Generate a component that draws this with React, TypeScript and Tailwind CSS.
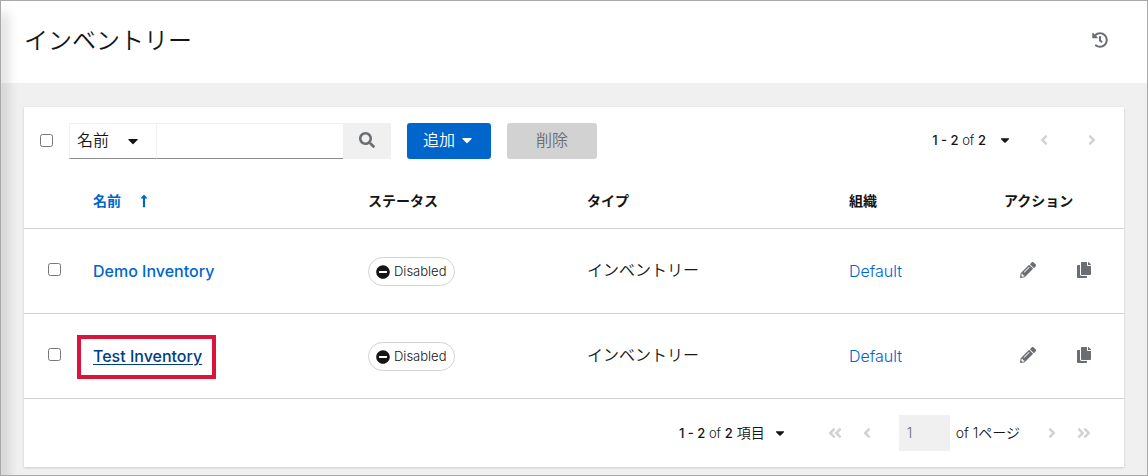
import { useState } from "react";
import {
  FaAngleDoubleLeft,
  FaAngleDoubleRight,
  FaAngleLeft,
  FaAngleRight,
  FaCaretDown,
  FaCopy,
  FaHistory,
  FaLongArrowAltUp,
  FaMinusCircle,
  FaPencilAlt,
  FaSearch,
} from "react-icons/fa";

type Inventory = {
  name: string;
  status: string;
  type: string;
  organization: string;
  highlighted?: boolean;
};

const inventories: Inventory[] = [
  { name: "Demo Inventory", status: "Disabled", type: "インベントリー", organization: "Default" },
  { name: "Test Inventory", status: "Disabled", type: "インベントリー", organization: "Default", highlighted: true },
];

function Range({ unit }: { unit?: string }) {
  return (
    <span className="whitespace-nowrap">
      <span className="text-[13px]">
        <b className="font-medium">1 - 2</b> of <b className="font-medium">2</b>
      </span>
      {unit && <span> {unit}</span>}
    </span>
  );
}

function Toolbar() {
  return (
    <div className="flex items-center p-4">
      <input type="checkbox" aria-label="すべて選択" className="mr-4 mb-[2px] size-[13px]" />
      <form className="flex h-9" onSubmit={(e) => e.preventDefault()}>
        <div className="relative flex w-[88px]">
          <select
            aria-label="検索キー"
            className="w-full appearance-none border border-[#f0f0f0] border-b-[#8a8d90] bg-white pb-[2px] pl-[7px] text-base"
          >
            <option>名前</option>
          </select>
          <FaCaretDown className="pointer-events-none absolute top-[10px] right-4 size-4" />
        </div>
        <input
          type="text"
          aria-label="検索"
          className="w-[186px] border-t border-b border-t-[#f0f0f0] border-b-[#8a8d90] bg-white px-2"
        />
        <button type="submit" aria-label="検索を実行" className="flex w-12 items-center justify-center bg-[#f0f0f0] pb-[2px] text-[#6a6e73]">
          <FaSearch className="size-4" />
        </button>
      </form>
      <button type="button" className="ml-4 flex h-9 w-21 items-center gap-1 rounded-[3px] bg-[#0066cc] pb-[2px] pl-4 text-base text-white">
        追加
        <FaCaretDown className="size-4" />
      </button>
      <button type="button" disabled className="ml-4 h-9 w-[90px] rounded-[3px] bg-[#d2d2d2] pb-[2px] text-base text-[#6a6e73]">
        削除
      </button>
      <div className="-mr-2 ml-auto flex items-center pb-[2px] text-sm">
        <button type="button" className="flex items-center gap-3">
          <Range />
          <FaCaretDown className="size-[14px]" />
        </button>
        <button type="button" disabled aria-label="前へ" className="ml-2 flex h-8 w-12 items-center justify-center text-[#d2d2d2]">
          <FaAngleLeft className="size-4" />
        </button>
        <button type="button" disabled aria-label="次へ" className="flex h-8 w-12 items-center justify-center text-[#d2d2d2]">
          <FaAngleRight className="size-4" />
        </button>
      </div>
    </div>
  );
}

function Row({ item }: { item: Inventory }) {
  return (
    <tr className="h-[85px] border-b border-[#d2d2d2]">
      <td className="pb-[2px] pl-6">
        <input type="checkbox" aria-label={item.name} className="block size-[13px]" />
      </td>
      <td className="px-4">
        <a
          href="#"
          className={
            item.highlighted
              ? "relative inline-block font-medium text-[#004080] underline underline-offset-2"
              : "inline-block font-medium text-[#0066cc]"
          }
        >
          {item.name}
          {item.highlighted && (
            <span className="absolute -top-[9px] -right-[14px] -bottom-[11px] -left-4 border-4 border-[#dc143c]" />
          )}
        </a>
      </td>
      <td className="px-4 pt-[2px]">
        <span className="inline-flex h-[29px] items-center gap-1 rounded-full border border-[#d2d2d2] pr-2 pl-[7px] align-middle text-[13px]">
          <FaMinusCircle className="size-[14px]" />
          {item.status}
        </span>
      </td>
      <td className="px-4 pb-[2px]">{item.type}</td>
      <td className="px-4">
        <a href="#" className="text-[#0066cc]">{item.organization}</a>
      </td>
      <td className="pb-[2px] pl-4">
        <div className="flex gap-2 text-[#6a6e73]">
          <button type="button" aria-label="編集" className="flex h-9 w-12 items-center justify-center">
            <FaPencilAlt className="size-4" />
          </button>
          <button type="button" aria-label="コピー" className="flex h-9 w-12 items-center justify-center">
            <FaCopy className="size-4" />
          </button>
        </div>
      </td>
    </tr>
  );
}

function InventoryTable() {
  return (
    <table className="w-full table-fixed border-collapse text-left text-base">
      <colgroup>
        <col className="w-[53px]" />
        <col className="w-[275px]" />
        <col className="w-[219px]" />
        <col className="w-[262px]" />
        <col className="w-[155px]" />
        <col className="w-[136px]" />
      </colgroup>
      <thead>
        <tr className="h-[53px] border-b border-[#d2d2d2] text-sm">
          <td />
          <th className="px-4 font-bold text-[#0066cc]">
            <button type="button" className="flex items-center gap-4">
              名前
              <FaLongArrowAltUp className="size-[14px]" />
            </button>
          </th>
          <th className="px-4 font-bold">ステータス</th>
          <th className="px-4 font-bold">タイプ</th>
          <th className="px-4 font-bold">組織</th>
          <th className="pl-4 font-bold">アクション</th>
        </tr>
      </thead>
      <tbody>
        {inventories.map((item) => (
          <Row key={item.name} item={item} />
        ))}
      </tbody>
    </table>
  );
}

function Footer() {
  const [page, setPage] = useState("1");
  const nav = "flex h-9 w-8 items-center justify-center text-[#d2d2d2]";
  return (
    <nav aria-label="ページネーション" className="flex items-center justify-end py-4 pr-6 text-sm">
      <button type="button" className="mr-8 flex items-center gap-2">
        <Range unit="項目" />
        <FaCaretDown className="size-[14px]" />
      </button>
      <button type="button" disabled aria-label="最初のページ" className={nav}>
        <FaAngleDoubleLeft className="size-4" />
      </button>
      <button type="button" disabled aria-label="前のページ" className={nav}>
        <FaAngleLeft className="size-4" />
      </button>
      <input
        type="text"
        aria-label="現在のページ"
        value={page}
        disabled
        onChange={(e) => setPage(e.target.value)}
        className="ml-4 h-9 w-[51px] bg-[#f0f0f0] px-2 text-[#6a6e73]"
      />
      <span className="mr-4 ml-[6px] whitespace-nowrap">of 1ページ</span>
      <button type="button" disabled aria-label="次のページ" className={nav}>
        <FaAngleRight className="size-4" />
      </button>
      <button type="button" disabled aria-label="最後のページ" className={nav}>
        <FaAngleDoubleRight className="size-4" />
      </button>
    </nav>
  );
}

export default function App() {
  return (
    <div className="relative min-h-screen overflow-hidden border border-[#a9a9a9] bg-[#f0f0f0] font-['Inter','Noto_Sans_CJK_JP',sans-serif] font-[350] text-[#151515]">
      <div className="pointer-events-none absolute top-1 -bottom-6 -left-6 w-6 shadow-[14px_0_12px_-8px_rgba(3,3,3,0.18)]" />
      <header className="flex items-center justify-between bg-white px-[23px] pt-[23px] pb-[25px]">
        <h1 className="text-2xl leading-[34px] font-[350]">インベントリー</h1>
        <button type="button" aria-label="履歴" className="flex h-8 w-12 items-center justify-center pb-[2px] text-[#6a6e73]">
          <FaHistory className="size-4" />
        </button>
      </header>
      <main className="px-[23px] pt-6 pb-2">
        <section className="bg-white shadow-[0_1px_2px_0_rgba(3,3,3,0.12),0_0_2px_0_rgba(3,3,3,0.06)]">
          <Toolbar />
          <InventoryTable />
          <Footer />
        </section>
      </main>
    </div>
  );
}
